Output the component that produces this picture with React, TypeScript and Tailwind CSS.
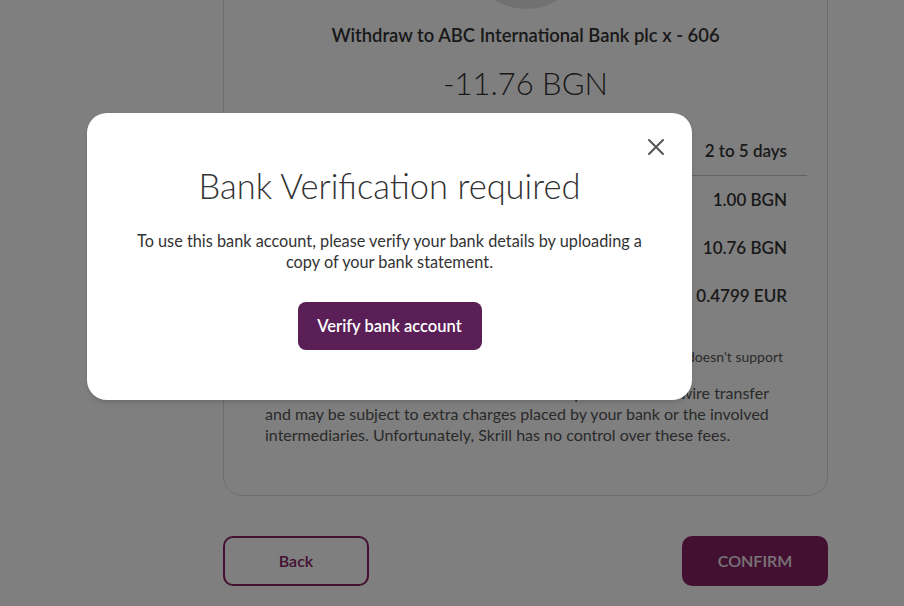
import React from "react";

const font = { fontFamily: "Lato, 'Liberation Sans', sans-serif" };

function Row({ value }: { value: string }) {
  return (
    <div className="flex h-[48px] items-center justify-end px-[20px]">
      <span className="text-[17px] font-semibold text-[#333]">{value}</span>
    </div>
  );
}

export default function App() {
  return (
    <div className="relative h-[606px] w-[904px] overflow-hidden bg-white" style={font}>
      {/* underlying page */}
      <div className="ml-[223px] w-[605px]">
        <div className="mt-[-140px] rounded-[20px] border border-[#dcdcdc] pt-[28px] pb-[50px]">
          <div className="mx-auto h-[120px] w-[120px] rounded-full bg-[#e2e2e2]" />
          <div className="mt-[14px] text-center text-[18.4px] font-semibold leading-[24px] text-[#333]">
            Withdraw to ABC International Bank plc x - 606
          </div>
          <div className="mt-[15px] text-center text-[31px] font-light leading-[42px] text-[#333]">
            -11.76 BGN
          </div>
          <div className="mx-[20px] mt-[23px]">
            <Row value="2 to 5 days" />
            <div className="h-px bg-[#c8c8c8]" />
            <Row value="1.00 BGN" />
            <Row value="10.76 BGN" />
            <Row value="0.4799 EUR" />
          </div>
          <div className="mt-[28px] pr-[44px] text-right text-[14px] leading-[18px] text-[#555] whitespace-nowrap">
            The fee shown is an estimate as your bank doesn't support
          </div>
          <div className="mx-[41px] mt-[16px] text-[16px] leading-[21px] text-[#555]">
            <div className="pr-[17px] text-right whitespace-nowrap">
              Please note that this withdrawal is processed as a wire transfer
            </div>
            <div className="whitespace-nowrap">
              and may be subject to extra charges placed by your bank or the involved
            </div>
            <div className="whitespace-nowrap">
              intermediaries. Unfortunately, Skrill has no control over these fees.
            </div>
          </div>
        </div>
        <div className="mt-[40px] flex justify-between">
          <button className="h-[50px] w-[146px] rounded-[10px] border-2 border-[#862165] text-[16px] font-semibold text-[#862165]">
            Back
          </button>
          <button className="h-[50px] w-[146px] rounded-[10px] bg-[#862165] text-[16px] font-semibold text-white/90">
            CONFIRM
          </button>
        </div>
      </div>

      {/* overlay */}
      <div className="absolute inset-0 bg-black/50" />

      {/* modal */}
      <div className="absolute left-[87px] top-[113px] w-[605px] rounded-[20px] bg-white pt-[51px] pb-[50px] shadow-md">
        <button className="absolute right-[26px] top-[24px] flex h-[20px] w-[20px] items-center justify-center text-[#555]">
          <svg width="18" height="18" viewBox="0 0 18 18" fill="none" stroke="currentColor" strokeWidth="2" strokeLinecap="round">
            <path d="M2 2 L16 16 M16 2 L2 16" />
          </svg>
        </button>
        <div className="text-center text-[34.5px] font-light leading-[44px] text-[#333]">
          Bank Verification required
        </div>
        <div className="mx-auto mt-[22px] w-[530px] text-center text-[16.3px] leading-[21px] text-[#333]">
          To use this bank account, please verify your bank details by uploading a copy of your bank statement.
        </div>
        <div className="mt-[30px] flex justify-center">
          <button className="h-[48px] w-[184px] rounded-[8px] bg-[#5a1f57] text-[16.5px] font-semibold text-white">
            Verify bank account
          </button>
        </div>
      </div>
    </div>
  );
}
